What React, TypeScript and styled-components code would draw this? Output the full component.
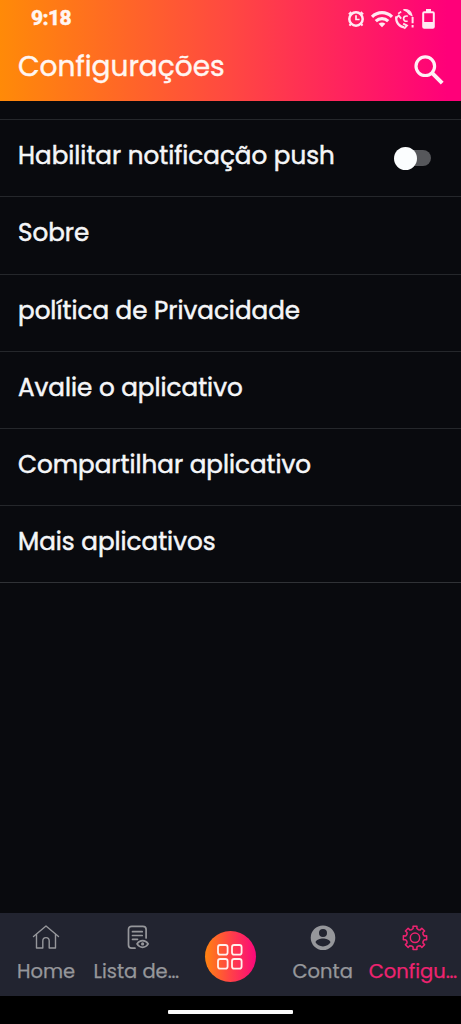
import React from 'react';
import styled, { createGlobalStyle } from 'styled-components';

const GlobalStyle = createGlobalStyle`
  * { box-sizing: border-box; }
  body {
    margin: 0;
    background: #000;
    font-family: Poppins, Inter, "Liberation Sans", sans-serif;
    -webkit-font-smoothing: antialiased;
  }
`;

const Screen = styled.div`
  display: flex;
  flex-direction: column;
  width: 461px;
  height: 1024px;
  overflow: hidden;
  background: #090a0e;
`;

const Header = styled.header`
  flex: none;
  height: 101px;
  background: linear-gradient(90deg, #ff8a08 0%, #ff4841 50%, #ff0079 97%);
  color: #fff6f2;
`;

const StatusBar = styled.div`
  display: flex;
  align-items: center;
  justify-content: space-between;
  height: 36px;
  padding: 0 26px 0 31px;
`;

const Clock = styled.span`
  font-family: Roboto, "Open Sans", sans-serif;
  font-size: 21px;
  font-weight: 800;
  line-height: 34px;
  letter-spacing: -0.6px;
  -webkit-text-stroke: 0.4px currentColor;
`;

const StatusIcons = styled.div`
  display: flex;
  align-items: center;
  margin-top: 2px;
`;

const TitleBar = styled.div`
  display: flex;
  align-items: center;
  justify-content: space-between;
  height: 62px;
  padding: 0 17px 0 18px;
`;

const Title = styled.h1`
  margin: 0;
  font-size: 28px;
  font-weight: 400;
  line-height: 62px;
  -webkit-text-stroke: 0.4px currentColor;
`;

const IconButton = styled.button`
  display: flex;
  margin: 6px 0 0;
  padding: 0;
  border: 0;
  background: none;
  color: inherit;
`;

const List = styled.main`
  flex: 1;
  padding-top: 18px;
`;

const Row = styled.div`
  display: flex;
  align-items: center;
  justify-content: space-between;
  height: 77.25px;
  padding: 0 30px 4px 18px;
  border-top: 1px solid #25272b;
  &:last-child { border-bottom: 1px solid #303236; }
`;

const RowLabel = styled.span`
  font-size: 24.6px;
  font-weight: 400;
  line-height: 36px;
  color: #f5f6f8;
  -webkit-text-stroke: 0.5px currentColor;
  white-space: nowrap;
`;

const Track = styled.span`
  display: flex;
  align-items: center;
  width: 36px;
  height: 16px;
  margin-top: 4px;
  border-radius: 8px;
  background: #56575b;
`;

const Knob = styled.span`
  flex: none;
  width: 23px;
  height: 23px;
  margin-left: -1px;
  border-radius: 50%;
  background: #fbfdfe;
`;

const Nav = styled.nav`
  display: grid;
  grid-template-columns: repeat(5, 1fr);
  flex: none;
  height: 83px;
  background: #222430;
`;

const NavItem = styled.div<{ $active?: boolean }>`
  display: flex;
  flex-direction: column;
  align-items: center;
  min-width: 0;
  padding-top: 11px;
  color: ${(p) => (p.$active ? '#ee2370' : '#96979b')};
`;

const NavLabel = styled.span<{ $truncated?: boolean }>`
  margin-top: 5px;
  margin-right: ${(p) => (p.$truncated ? 4 : 0)}px;
  font-size: 19.5px;
  line-height: 30px;
  -webkit-text-stroke: 0.25px currentColor;
  white-space: nowrap;
`;

const CenterSlot = styled.div`
  display: flex;
  align-items: center;
  justify-content: center;
  padding-top: 4px;
`;

const CenterButton = styled.span`
  display: flex;
  align-items: center;
  justify-content: center;
  width: 51px;
  height: 51px;
  border-radius: 50%;
  background: linear-gradient(90deg, #ff8410, #ff3f49 52%, #fa087b);
`;

const GestureArea = styled.div`
  display: flex;
  justify-content: center;
  flex: none;
  height: 28px;
  padding-top: 14px;
  background: #000;
`;

const GestureBar = styled.div`
  width: 125px;
  height: 4px;
  border-radius: 1px;
  background: #fafafa;
`;

const AlarmIcon = () => (
  <svg width="18" height="18" viewBox="0 0 18 18" fill="none" stroke="#ffeaf2">
    <circle cx="9" cy="9" r="6.7" strokeWidth="2.5" />
    <path d="M1.9 4.4 4.3 2M13.7 2l2.4 2.4M3.8 14 2.5 15.6M14.2 14l1.3 1.6" strokeWidth="2" />
    <path d="M9 5.2v4.3h3.6" strokeWidth="1.7" />
  </svg>
);

const WifiIcon = () => (
  <svg width="24" height="18" viewBox="0 0 24 18" fill="none" stroke="#ffeaf2" strokeWidth="3.2">
    <path d="M2 6.8C7.8 1.3 16.2 1.3 22 6.8" />
    <path d="M5.8 11.1c3.6-3.4 8.8-3.4 12.4 0" />
    <path d="M8.6 13.8c2-1.8 4.8-1.8 6.8 0L12 17.2z" fill="#ffeaf2" stroke="none" />
  </svg>
);

const SyncIcon = () => (
  <svg width="21" height="22" viewBox="0 0 21 22" fill="none" stroke="#ffe3ee">
    <path d="M9.5 1.7c4.6-.5 7.8 1.8 8.3 5.7l-2.6-1.5C13.8 3.5 11.8 2.6 9.5 1.7z" fill="#ffe3ee" strokeWidth="1.4" />
    <path d="M2.3 8.3c-.8 5.9 2.7 10.3 8 11" strokeWidth="2.2" />
    <path d="M1.6 10.4 4.8 7.6l2.4 3M10.2 20.6l2.8-3-3.8-2" strokeWidth="1.8" />
    <path d="M13.8 8.2c-2.7-.7-4.4.7-4.2 2.7.1 1.8 1.9 2.8 4 2.1M4.2 5.8l3-2.2" strokeWidth="1.7" />
    <path d="M18.6 9v6.3M18.6 17v2.4" strokeWidth="2" />
  </svg>
);

const BatteryIcon = () => (
  <svg width="13" height="20" viewBox="0 0 13 20" fill="none">
    <path d="M4 0h5v3H4z" fill="#ffeaf2" />
    <rect x="1.2" y="3.2" width="10.6" height="15.6" rx="1" stroke="#ffeaf2" strokeWidth="2" />
    <path d="M2 13h9v5H2z" fill="#ffeaf2" />
  </svg>
);

const SearchIcon = () => (
  <svg width="30" height="30" viewBox="0 0 30 30" fill="none" stroke="#fff0f6">
    <circle cx="11.3" cy="11.2" r="9.3" strokeWidth="3.2" />
    <path d="m18.2 18.2 10 10" strokeWidth="4" />
  </svg>
);

const HomeIcon = () => (
  <svg width="28" height="28" viewBox="0 0 28 28" fill="none" stroke="currentColor" strokeWidth="1.4" strokeLinejoin="round" strokeLinecap="round">
    <path d="M1.5 12.5 14 2 26.5 12.5" />
    <path d="M4.5 10.5V24h6.3v-7c0-4.5 6.4-4.5 6.4 0v7h6.3V10.5" />
  </svg>
);

const WatchlistIcon = () => (
  <svg width="28" height="28" viewBox="0 0 28 28" fill="none" stroke="currentColor" strokeWidth="1.7" strokeLinecap="round" strokeLinejoin="round">
    <path d="M11 24.2H7.7C5.8 24.2 4.5 23 4.5 21V5.4C4.5 3.4 5.8 2.3 7.7 2.3h11.2c1.9 0 3.2 1.1 3.2 3.1V14" />
    <path d="M8.5 7.7h9.7M8.5 11.5h9.7M8.5 15.3h5" strokeWidth="1.7" />
    <path d="M13 19.9c2.8-4.5 8.4-4.5 11.2 0-2.8 4.5-8.4 4.5-11.2 0z" />
    <circle cx="18.6" cy="19.9" r="1.6" fill="currentColor" stroke="none" />
  </svg>
);

const AccountIcon = () => (
  <svg width="28" height="28" viewBox="0 0 28 28" fill="currentColor">
    <path fillRule="evenodd" d="M14 1.4a12.3 12.3 0 1 0 0 24.6 12.3 12.3 0 0 0 0-24.6zm0 3.6a4 4 0 1 1 0 8 4 4 0 0 1 0-8zm0 17.4c-3.2 0-6-1.6-7.5-4.1.1-2.5 5-3.8 7.5-3.8s7.4 1.3 7.5 3.8c-1.5 2.5-4.3 4.1-7.5 4.1z" />
  </svg>
);

const gearOutline = (() => {
  const steps: string[] = [];
  for (let i = 0; i < 8; i += 1) {
    const points = [[-22.5, 8.8], [-11.5, 9.5], [-9.5, 11.8], [9.5, 11.8], [11.5, 9.5]];
    points.forEach(([offset, radius]) => {
      const angle = ((i * 45 + offset - 90) * Math.PI) / 180;
      steps.push(`${(14 + radius * Math.cos(angle)).toFixed(2)} ${(13.8 + radius * Math.sin(angle)).toFixed(2)}`);
    });
  }
  return `M${steps.join('L')}z`;
})();

const GearIcon = () => (
  <svg width="28" height="28" viewBox="0 0 28 28" fill="none" stroke="currentColor" strokeWidth="1.5" strokeLinejoin="round">
    <path d={gearOutline} />
    <circle cx="14" cy="13.8" r="4.7" />
  </svg>
);

const GridIcon = () => (
  <svg width="28" height="28" viewBox="0 0 28 28" fill="none" stroke="#fff0ed" strokeWidth="1.8">
    <rect x="2" y="2" width="9.6" height="9.6" rx="2.2" />
    <rect x="16" y="2" width="9.6" height="9.6" rx="2.2" />
    <rect x="2" y="16" width="9.6" height="9.6" rx="2.2" />
    <rect x="16" y="16" width="9.6" height="9.6" rx="2.2" />
  </svg>
);

const IconGap = styled.span<{ $size: number }>`
  width: ${(p) => p.$size}px;
`;

const rows = [
  { label: 'Habilitar notificação push', toggle: true },
  { label: 'Sobre' },
  { label: 'política de Privacidade' },
  { label: 'Avalie o aplicativo' },
  { label: 'Compartilhar aplicativo' },
  { label: 'Mais aplicativos' },
];

export default function App() {
  return (
    <>
      <GlobalStyle />
      <Screen>
        <Header>
          <StatusBar>
            <Clock>9:18</Clock>
            <StatusIcons>
              <AlarmIcon />
              <IconGap $size={5} />
              <WifiIcon />
              <SyncIcon />
              <IconGap $size={7} />
              <BatteryIcon />
            </StatusIcons>
          </StatusBar>
          <TitleBar>
            <Title>Configurações</Title>
            <IconButton aria-label="Pesquisar"><SearchIcon /></IconButton>
          </TitleBar>
        </Header>
        <List>
          {rows.map((row) => (
            <Row key={row.label}>
              <RowLabel>{row.label}</RowLabel>
              {row.toggle && <Track><Knob /></Track>}
            </Row>
          ))}
        </List>
        <Nav>
          <NavItem><HomeIcon /><NavLabel>Home</NavLabel></NavItem>
          <NavItem><WatchlistIcon /><NavLabel $truncated>Lista de…</NavLabel></NavItem>
          <CenterSlot><CenterButton><GridIcon /></CenterButton></CenterSlot>
          <NavItem><AccountIcon /><NavLabel>Conta</NavLabel></NavItem>
          <NavItem $active><GearIcon /><NavLabel $truncated>Configu…</NavLabel></NavItem>
        </Nav>
        <GestureArea><GestureBar /></GestureArea>
      </Screen>
    </>
  );
}
